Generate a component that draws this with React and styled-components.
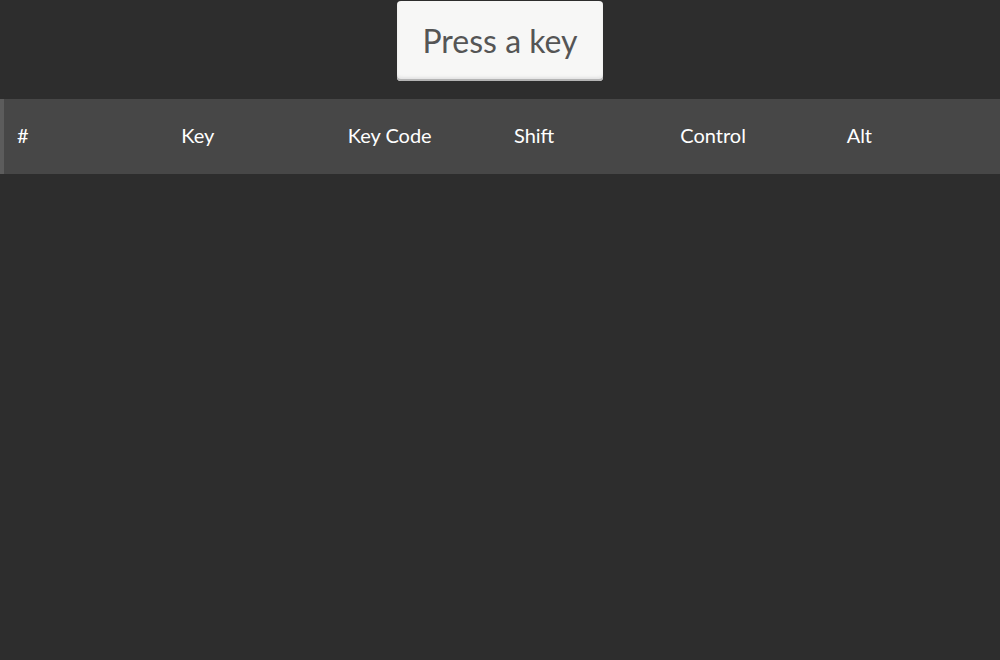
import React from 'react';
import styled, { createGlobalStyle } from 'styled-components';

const GlobalStyle = createGlobalStyle`
  html, body {
    margin: 0;
    padding: 0;
    background: #2d2d2d;
    font-family: 'Lato', 'Open Sans', sans-serif;
  }
`;

const Page = styled.div`
  display: flex;
  flex-direction: column;
  align-items: center;
  min-height: 660px;
  background: #2d2d2d;
`;

const PressButton = styled.button`
  margin-top: 1px;
  width: 206px;
  height: 80px;
  background: #f7f7f6;
  color: #555;
  border: none;
  border-radius: 4px;
  box-shadow: inset 0 -2px 0 #b4b4b4, inset 0 -4px 3px #e4e4e4;
  font-family: 'Lato', sans-serif;
  font-size: 32px;
  cursor: pointer;
  padding: 0 0 2px;
`;

const Table = styled.table`
  margin-top: 18px;
  width: 100%;
  border-collapse: collapse;
  table-layout: fixed;
  border-left: 4px solid #5c5c5c;
`;

const HeadRow = styled.tr`
  background: #474747;
`;

const Th = styled.th`
  height: 72px;
  padding: 0 0 3px 13px;
  text-align: left;
  font-weight: 400;
  font-size: 20px;
  color: #fff;
`;

const columns = ['#', 'Key', 'Key Code', 'Shift', 'Control', 'Alt'];

const App = () => (
  <Page>
    <GlobalStyle />
    <PressButton>Press a key</PressButton>
    <Table>
      <thead>
        <HeadRow>
          {columns.map(c => (
            <Th key={c}>{c}</Th>
          ))}
        </HeadRow>
      </thead>
    </Table>
  </Page>
);

export default App;
